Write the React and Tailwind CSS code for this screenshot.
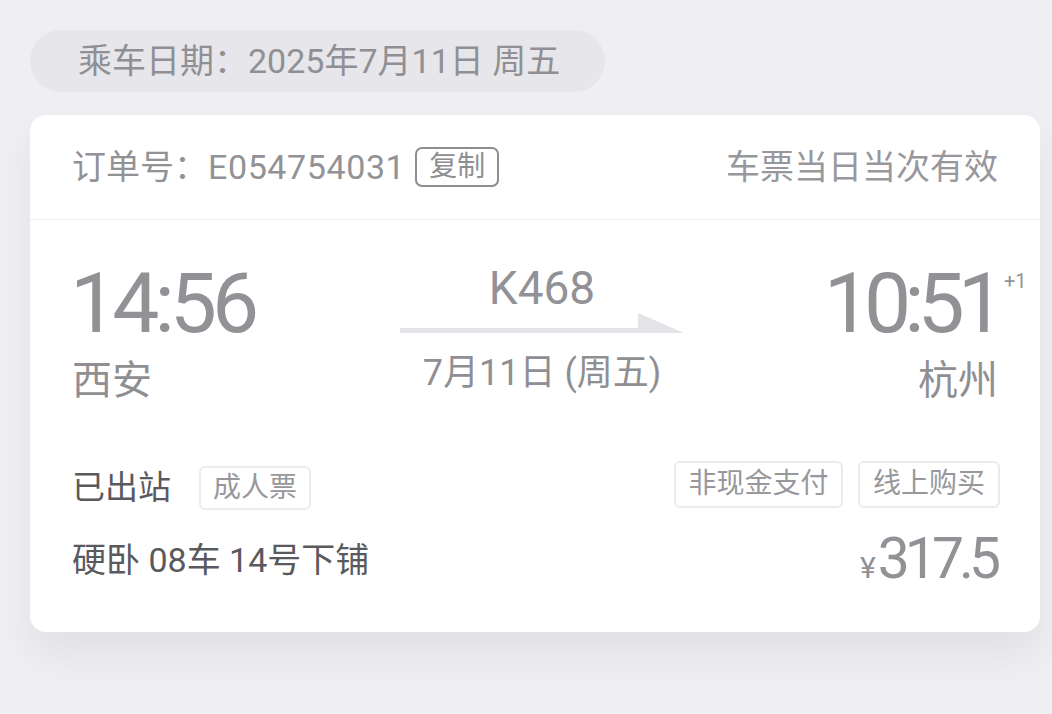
import React from 'react'

const font = { fontFamily: 'Roboto, "Noto Sans CJK SC", sans-serif' }

function Tag({ children, className = '' }) {
  return (
    <span
      className={`inline-flex items-center justify-center rounded-[6px] border-2 border-[#ebebee] text-[#98989c] text-[28px] leading-none ${className}`}
    >
      {children}
    </span>
  )
}

function Arrow() {
  return (
    <svg width="284" height="21" viewBox="0 0 284 21" className="block">
      <rect x="0" y="15" width="240" height="5" fill="#e4e3e8" />
      <polygon points="238,0 284,20 238,20" fill="#e4e3e8" />
    </svg>
  )
}

export default function App() {
  return (
    <div className="w-[1052px] h-[714px] bg-[#efeef2] overflow-hidden" style={font}>
      <div className="pt-[30px] pl-[30px]">
        <div className="w-[575px] h-[62px] rounded-full bg-[#e7e6ea] flex items-center pl-[48px] text-[34px] text-[#909094] leading-none">
          乘车日期：2025年7月11日 周五
        </div>
      </div>

      <div className="mt-[23px] ml-[30px] w-[1010px] h-[517px] bg-white rounded-[16px] shadow-[0_22px_40px_rgba(0,0,0,0.06)]">
        {/* header */}
        <div className="h-[105px] flex items-center justify-between pl-[42px] pr-[42px] border-b border-[#eeeef0]">
          <div className="flex items-center text-[34px] text-[#929296] leading-none">
            <span>
              订单号：<span className="tracking-[0.6px]">E054754031</span>
            </span>
            <span className="ml-[10px] w-[84px] h-[40px] rounded-[7px] border-2 border-[#8e8e92] flex items-center justify-center text-[28px] text-[#8e8e92]">
              复制
            </span>
          </div>
          <div className="text-[34px] text-[#98989c] leading-none">车票当日当次有效</div>
        </div>

        {/* times */}
        <div className="pl-[40px] pr-[40px] pt-[46px] flex justify-between">
          <div className="flex flex-col">
            <div className="text-[84px] leading-[76px] text-[#929296] tracking-[-5px]">14:56</div>
            <div className="mt-[15px] text-[40px] leading-[48px] text-[#8f8f93] pl-[2px]">西安</div>
          </div>

          <div className="flex flex-col items-center -mt-[2px] ml-[6px]">
            <div className="text-[46px] leading-[48px] text-[#929296]">K468</div>
            <div className="mt-[1px]">
              <Arrow />
            </div>
            <div className="mt-[19px] text-[36px] leading-[40px] text-[#8f8f93]">7月11日 (周五)</div>
          </div>

          <div className="flex flex-col items-end">
            <div className="relative text-[84px] leading-[76px] text-[#929296] tracking-[-7px] pr-[2px]">
              10:51
              <span className="absolute left-full top-[5px] ml-[4px] text-[20px] leading-none text-[#929296] tracking-normal">
                +1
              </span>
            </div>
            <div className="mt-[15px] text-[40px] leading-[48px] text-[#8f8f93] pr-[2px]">杭州</div>
          </div>
        </div>

        {/* status */}
        <div className="pl-[42px] pr-[40px] mt-[59px] flex items-center justify-between">
          <div className="flex items-center">
            <span className="text-[33px] leading-none text-[#5a5a5e]">已出站</span>
            <Tag className="ml-[28px] w-[112px] h-[44px] mt-[2px]">成人票</Tag>
          </div>
          <div className="flex items-center gap-[15px] -mt-[6px]">
            <Tag className="w-[169px] h-[47px]">非现金支付</Tag>
            <Tag className="w-[142px] h-[47px]">线上购买</Tag>
          </div>
        </div>

        <div className="pl-[42px] pr-[40px] mt-[22px] flex items-center justify-between">
          <span className="text-[34px] leading-none text-[#5a5a5e]">硬卧 08车 14号下铺</span>
          <span className="flex items-baseline text-[#929296] leading-none pr-[4px] -mt-[2px]">
            <span className="text-[30px] mr-[2px]">¥</span>
            <span className="text-[57px] tracking-[-5px]">317.5</span>
          </span>
        </div>
      </div>
    </div>
  )
}
